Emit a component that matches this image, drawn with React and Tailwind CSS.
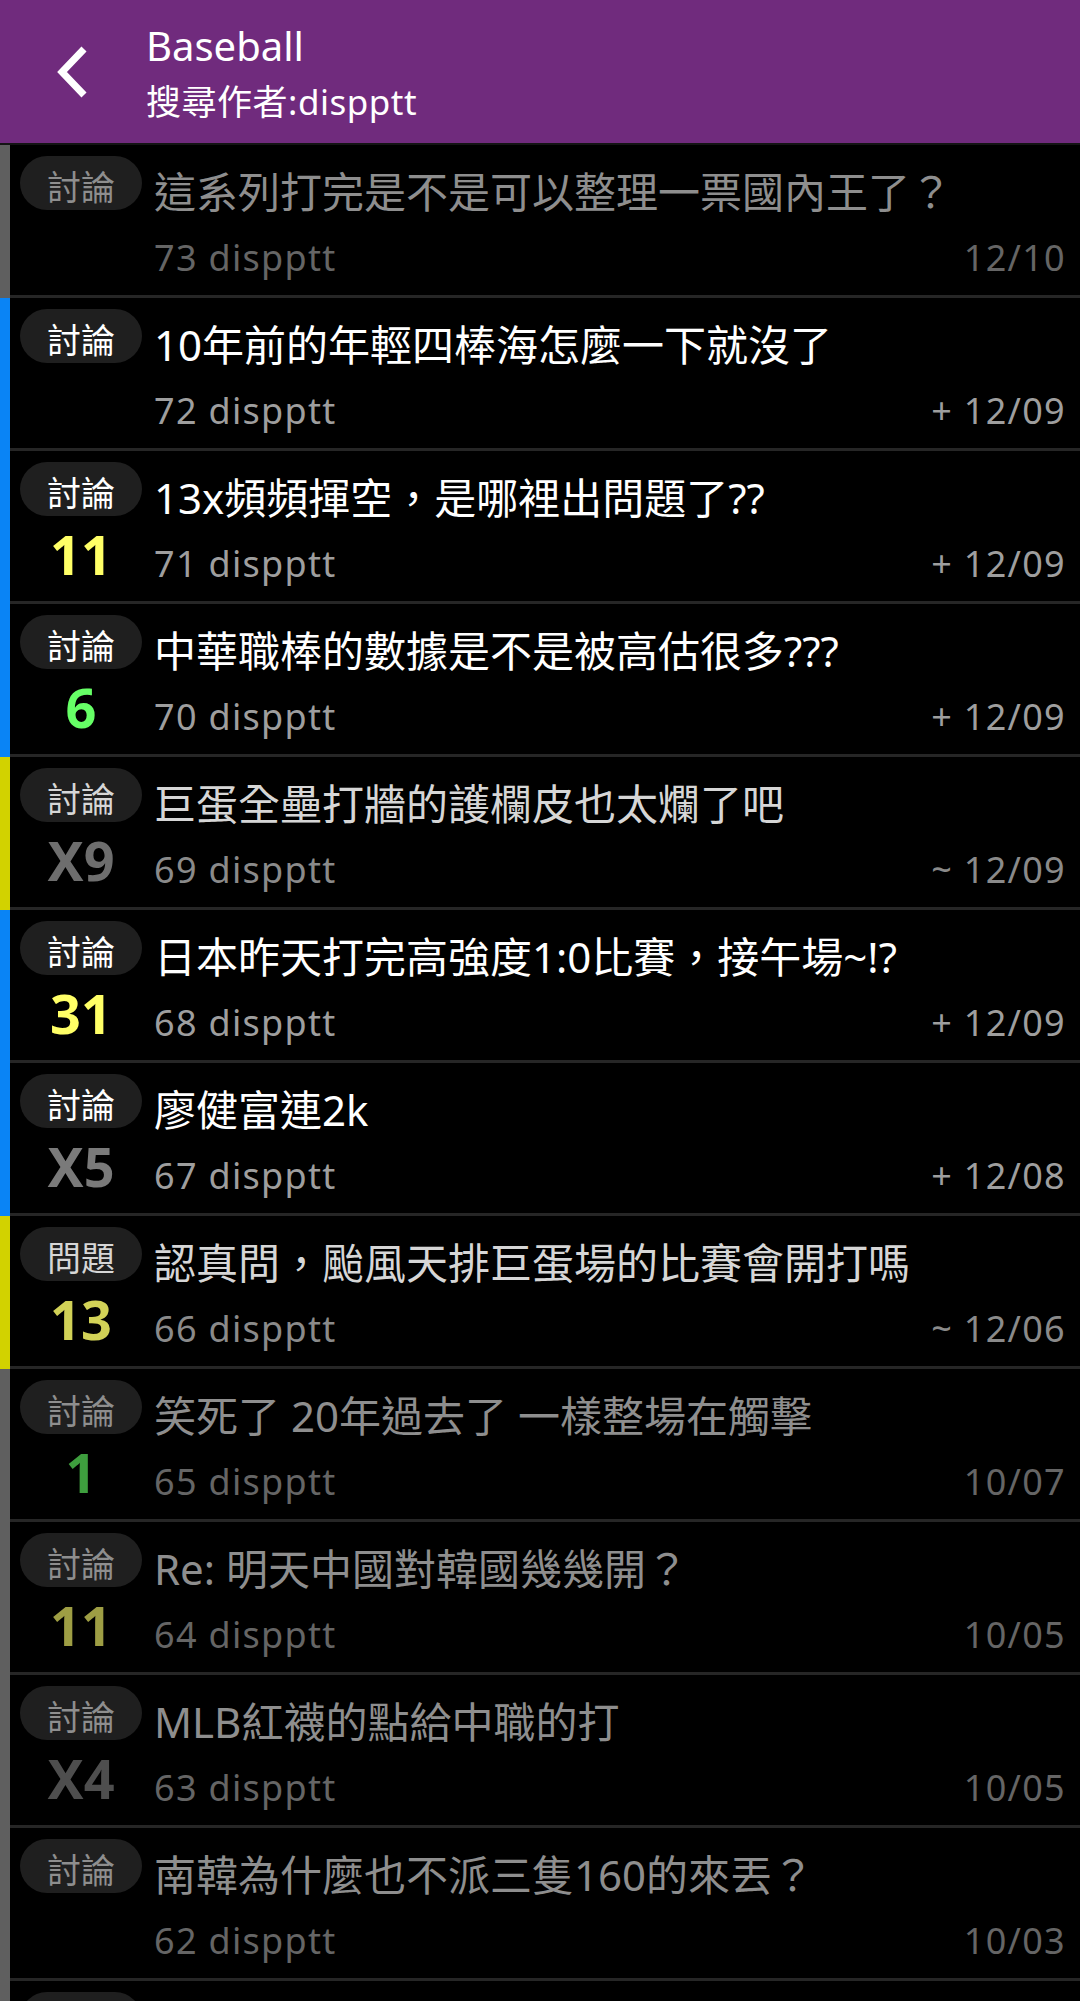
import React from "react";

const BAR = {
  gray: "bg-[#5f5f5f]",
  blue: "bg-[#0a84f5]",
  yellow: "bg-[#d2d200]",
};

// text tones for read / partly read / unread rows
const TONE = {
  bright: { title: "text-white", tag: "text-white", meta: "text-[#9e9e9e]" },
  mid: { title: "text-[#d6d6d6]", tag: "text-[#d6d6d6]", meta: "text-[#8a8a8a]" },
  dim: { title: "text-[#8e8e8e]", tag: "text-[#8e8e8e]", meta: "text-[#656565]" },
};

const posts = [
  { bar: "gray", tone: "dim", tag: "討論", title: "這系列打完是不是可以整理一票國內王了？", no: 73, date: "12/10" },
  { bar: "blue", tone: "bright", tag: "討論", title: "10年前的年輕四棒海怎麼一下就沒了", no: 72, date: "+ 12/09" },
  { bar: "blue", tone: "bright", tag: "討論", num: "11", numColor: "text-[#ffff66]", title: "13x頻頻揮空，是哪裡出問題了??", no: 71, date: "+ 12/09" },
  { bar: "blue", tone: "bright", tag: "討論", num: "6", numColor: "text-[#66ff66]", title: "中華職棒的數據是不是被高估很多???", no: 70, date: "+ 12/09" },
  { bar: "yellow", tone: "mid", tag: "討論", num: "X9", numColor: "text-[#6e6e6e]", title: "巨蛋全壘打牆的護欄皮也太爛了吧", no: 69, date: "~ 12/09" },
  { bar: "blue", tone: "bright", tag: "討論", num: "31", numColor: "text-[#ffff66]", title: "日本昨天打完高強度1:0比賽，接午場~!?", no: 68, date: "+ 12/09" },
  { bar: "blue", tone: "bright", tag: "討論", num: "X5", numColor: "text-[#7a7a7a]", title: "廖健富連2k", no: 67, date: "+ 12/08" },
  { bar: "yellow", tone: "mid", tag: "問題", num: "13", numColor: "text-[#d2d257]", title: "認真問，颱風天排巨蛋場的比賽會開打嗎", no: 66, date: "~ 12/06" },
  { bar: "gray", tone: "dim", tag: "討論", num: "1", numColor: "text-[#3e9e3e]", title: "笑死了 20年過去了 一樣整場在觸擊", no: 65, date: "10/07" },
  { bar: "gray", tone: "dim", tag: "討論", num: "11", numColor: "text-[#9e9e44]", title: "Re: 明天中國對韓國幾幾開？", no: 64, date: "10/05" },
  { bar: "gray", tone: "dim", tag: "討論", num: "X4", numColor: "text-[#4e4e4e]", title: "MLB紅襪的點給中職的打", no: 63, date: "10/05" },
  { bar: "gray", tone: "dim", tag: "討論", title: "南韓為什麼也不派三隻160的來丟？", no: 62, date: "10/03" },
];

const PostRow = ({ post }) => {
  const tone = TONE[post.tone];
  return (
    <div className="flex h-[153px]">
      <div className={`w-[10px] shrink-0 ${BAR[post.bar]}`} />
      <div className="flex flex-1 min-w-0 border-b-[3px] border-[#262626]">
        {/* tag + push count */}
        <div className="w-[142px] shrink-0 flex flex-col items-center pt-[11px]">
          <div
            className={`w-[122px] h-[54px] rounded-full bg-[#1f1f1f] flex items-center justify-center pt-[8px] text-[34px] leading-[46px] ${tone.tag}`}
          >
            {post.tag}
          </div>
          {post.num && (
            <div className={`mt-[8px] text-[54px] leading-[60px] font-bold ${post.numColor}`}>
              {post.num}
            </div>
          )}
        </div>

        {/* title + meta */}
        <div className="flex-1 min-w-0 ml-[2px] pt-[19px] pr-[14px]">
          <div className={`text-[42px] leading-[56px] whitespace-nowrap overflow-hidden ${tone.title}`}>
            {post.title}
          </div>
          <div
            className={`mt-[14px] flex justify-between text-[36px] leading-[48px] tracking-[1.3px] ${tone.meta}`}
          >
            <span>{post.no} dispptt</span>
            <span className="whitespace-pre">{post.date}</span>
          </div>
        </div>
      </div>
    </div>
  );
};

export default function App() {
  return (
    <div
      className="h-[2001px] bg-black overflow-hidden"
      style={{ fontFamily: '"Noto Sans", "Noto Sans CJK TC", sans-serif' }}
    >
      {/* Header */}
      <div className="h-[143px] bg-[#702b7d] flex">
        <div className="w-[146px] shrink-0 flex items-center justify-start pl-[52px]">
          <svg width="42" height="56" viewBox="0 0 42 56" fill="none">
            <path d="M32 5 L10 28 L32 51" stroke="white" strokeWidth="7" />
          </svg>
        </div>
        <div className="flex flex-col pt-[21px]">
          <div className="text-white text-[40px] leading-[50px]">Baseball</div>
          <div className="text-white text-[35px] leading-[44px] mt-[9px] tracking-[0.5px]">搜尋作者:dispptt</div>
        </div>
      </div>
      <div className="h-[2px] bg-[#141414]" />

      {posts.map((post) => (
        <PostRow key={post.no} post={post} />
      ))}

      {/* next row, cut off by the screen edge */}
      <div className="flex h-[153px]">
        <div className="w-[10px] shrink-0 bg-[#5f5f5f]" />
        <div className="w-[142px] shrink-0 flex flex-col items-center pt-[11px]">
          <div className="w-[122px] h-[54px] rounded-full bg-[#1f1f1f]" />
        </div>
      </div>
    </div>
  );
}
